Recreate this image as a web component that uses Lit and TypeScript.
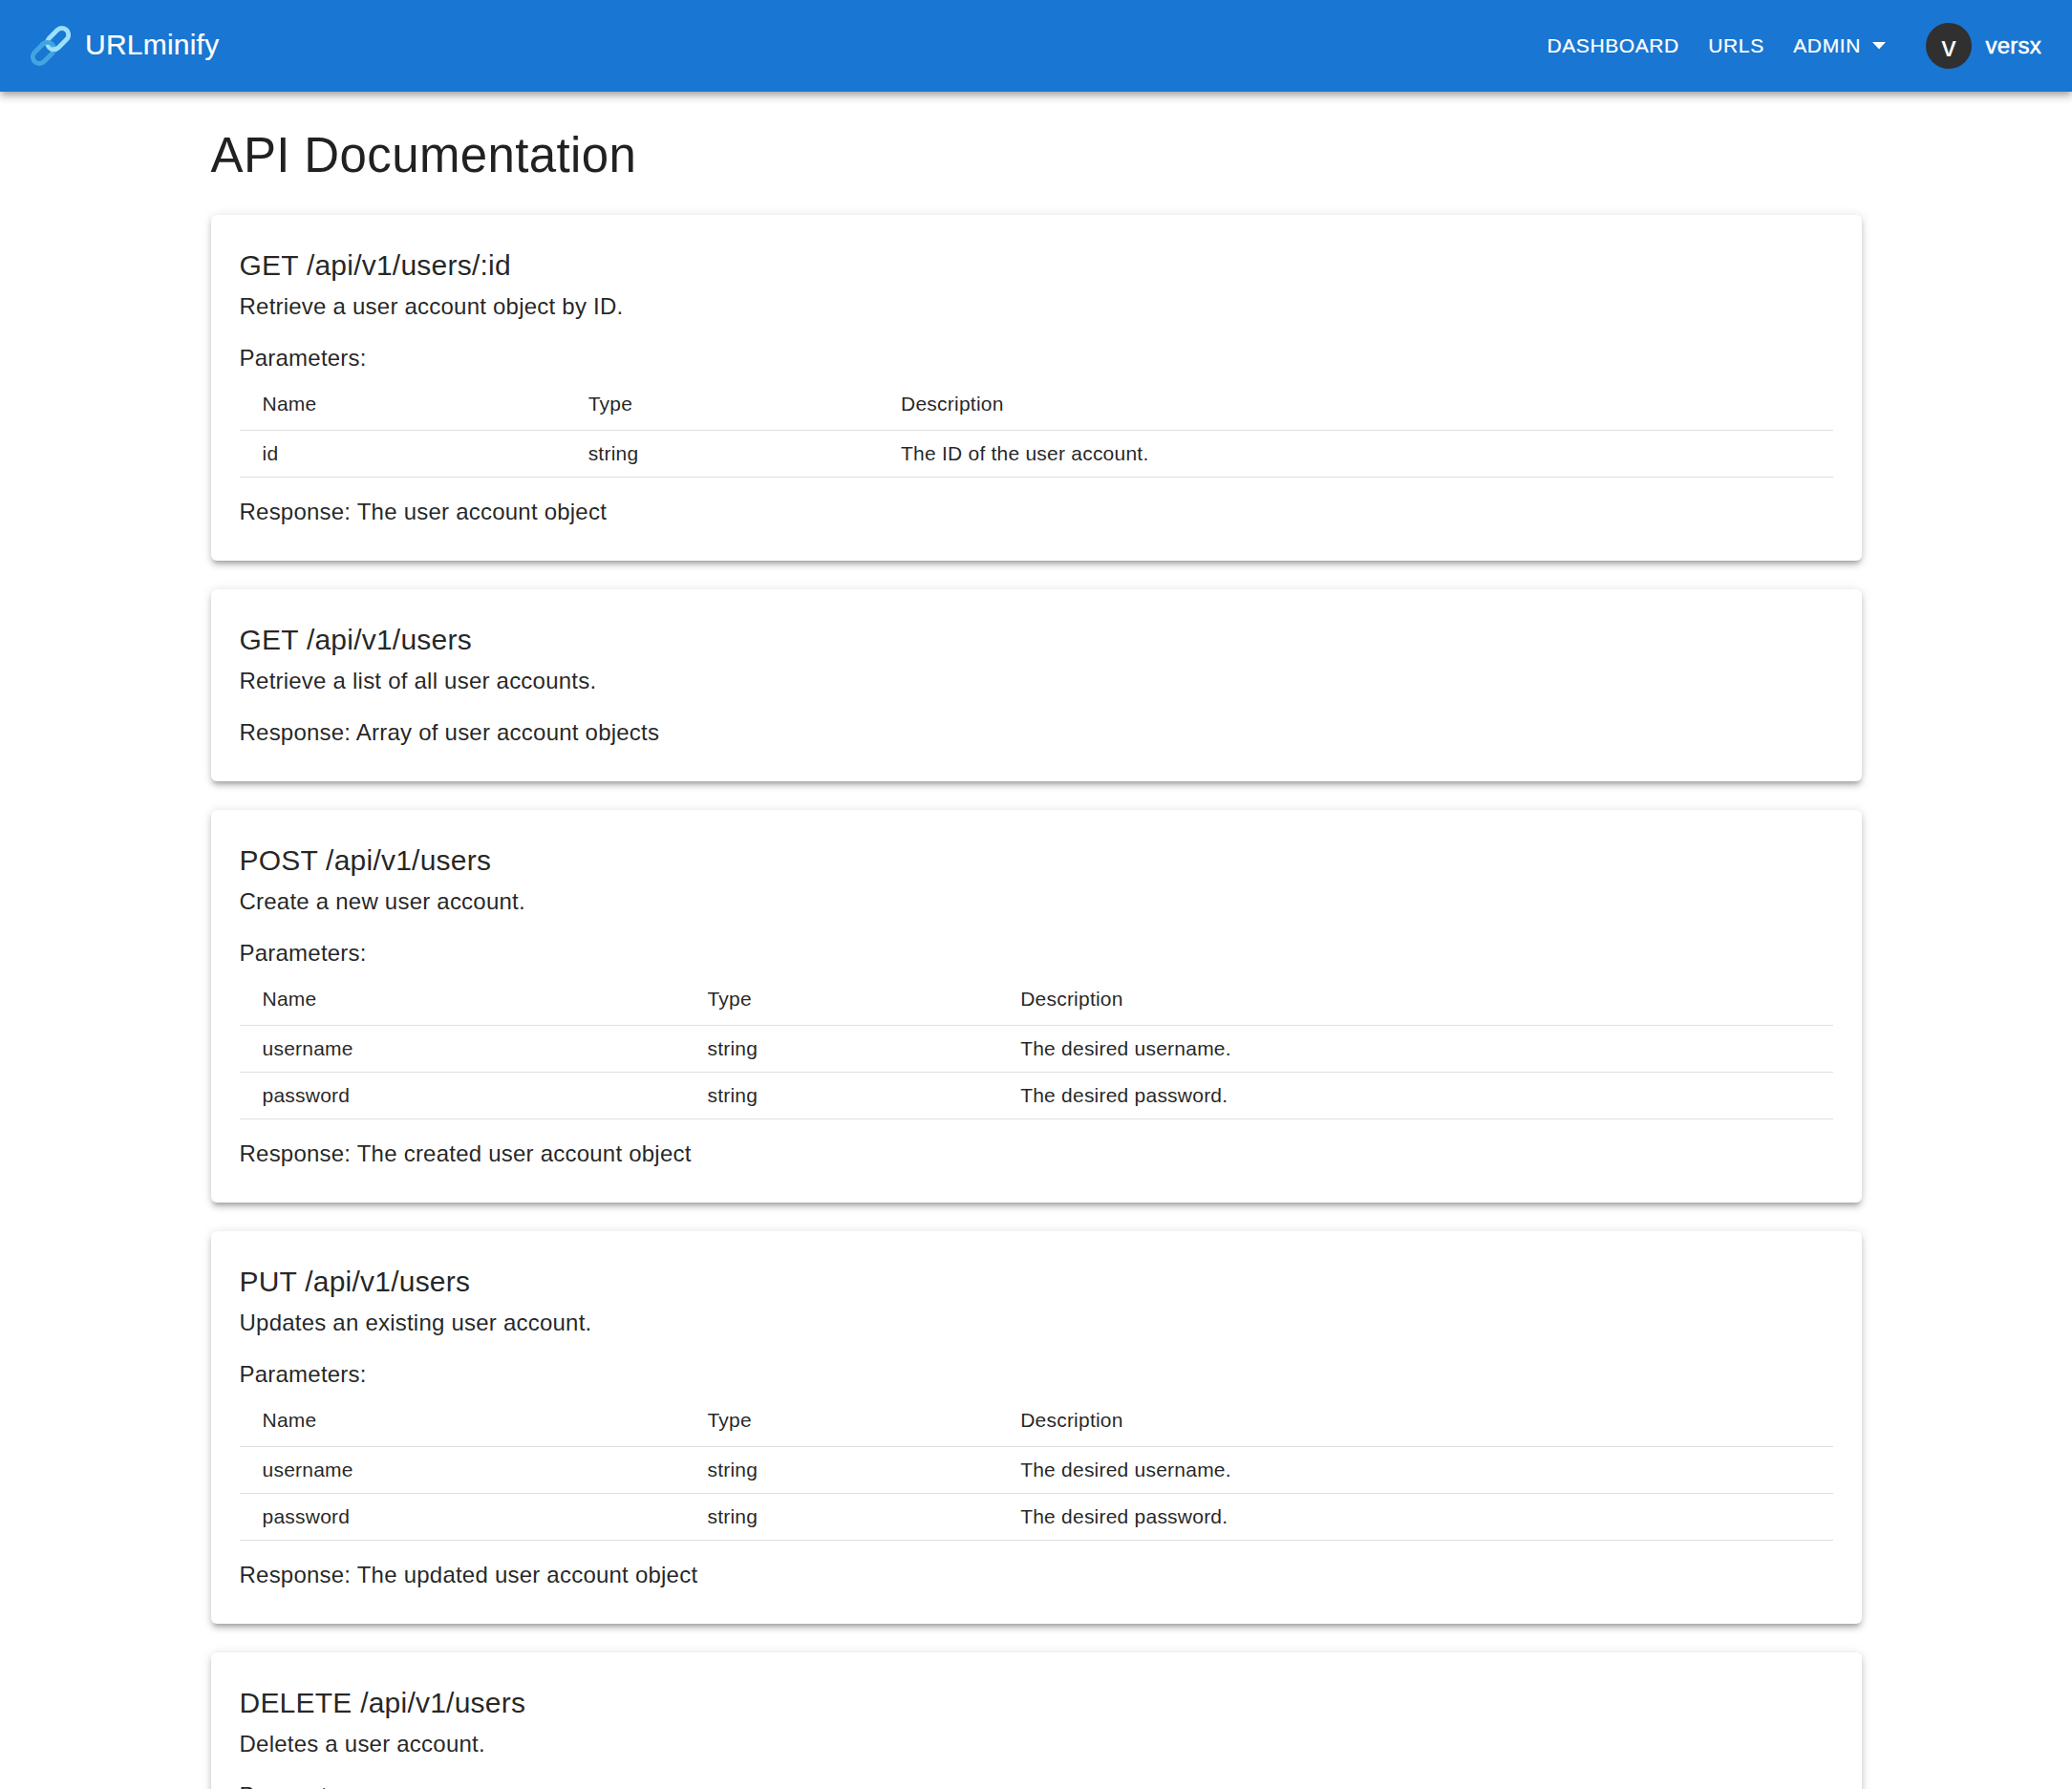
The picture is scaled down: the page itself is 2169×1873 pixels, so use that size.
import { LitElement, html, css, svg, nothing } from "lit";
import { customElement, property } from "lit/decorators.js";

interface Param {
  name: string;
  type: string;
  description: string;
}

interface Endpoint {
  method: string;
  path: string;
  summary: string;
  params?: Param[];
  response?: string;
}

const credentials: Param[] = [
  { name: "username", type: "string", description: "The desired username." },
  { name: "password", type: "string", description: "The desired password." },
];

const endpoints: Endpoint[] = [
  {
    method: "GET",
    path: "/api/v1/users/:id",
    summary: "Retrieve a user account object by ID.",
    params: [{ name: "id", type: "string", description: "The ID of the user account." }],
    response: "The user account object",
  },
  {
    method: "GET",
    path: "/api/v1/users",
    summary: "Retrieve a list of all user accounts.",
    response: "Array of user account objects",
  },
  {
    method: "POST",
    path: "/api/v1/users",
    summary: "Create a new user account.",
    params: credentials,
    response: "The created user account object",
  },
  {
    method: "PUT",
    path: "/api/v1/users",
    summary: "Updates an existing user account.",
    params: credentials,
    response: "The updated user account object",
  },
  {
    method: "DELETE",
    path: "/api/v1/users",
    summary: "Deletes a user account.",
    params: [],
  },
];

const linkIcon = svg`
  <g fill="none" stroke-width="4.8">
    <rect x="-12.85" y="-6.9" width="25.7" height="13.8" rx="6.9" transform="translate(13.4 28.4) rotate(-45)" stroke="#42a5e0"/>
    <rect x="-12.85" y="-6.9" width="25.7" height="13.8" rx="6.9" transform="translate(28.6 13.6) rotate(-45)" stroke="#9be1fb"/>
    <path d="M11.3 20.7 L12.7 19.3 A6.9 6.9 0 0 1 24 21.8" stroke="#42a5e0"/>
  </g>`;

@customElement("top-bar")
class TopBar extends LitElement {
  static styles = css`
    :host {
      display: flex;
      align-items: center;
      box-sizing: border-box;
      height: 96px;
      padding: 0 32px;
      background: #1976d2;
      color: #fff;
      box-shadow: 0 3px 6px -1.5px rgba(0, 0, 0, 0.2), 0 6px 7.5px 0 rgba(0, 0, 0, 0.14),
        0 1.5px 15px 0 rgba(0, 0, 0, 0.12);
    }
    .logo {
      width: 42px;
      height: 42px;
    }
    .brand {
      margin-left: 15px;
      padding-bottom: 2px;
      font-size: 30px;
      line-height: 48px;
      letter-spacing: 0.0075em;
      -webkit-text-stroke: 0.2px #fff;
    }
    .nav {
      margin-left: auto;
      display: flex;
      align-items: center;
      font-size: 21px;
      line-height: 36px;
      letter-spacing: 0.02857em;
      -webkit-text-stroke: 0.2px #fff;
    }
    .item {
      margin-right: 30.5px;
    }
    .admin {
      display: flex;
      align-items: center;
      margin-right: 41.5px;
    }
    .caret {
      width: 14px;
      height: 8px;
      margin-left: 12.5px;
    }
    .avatar {
      display: flex;
      align-items: center;
      justify-content: center;
      box-sizing: border-box;
      width: 48px;
      height: 48px;
      padding-top: 1px;
      border-radius: 50%;
      background: #303030;
      font-size: 30px;
      line-height: 30px;
      letter-spacing: 0;
    }
    .user {
      margin-left: 14.6px;
      font-size: 24px;
      letter-spacing: 0.00938em;
      -webkit-text-stroke: 0.5px #fff;
    }
  `;
  render() {
    return html`
      <svg class="logo" viewBox="0 0 42 42">${linkIcon}</svg>
      <div class="brand">URLminify</div>
      <div class="nav">
        <span class="item">DASHBOARD</span>
        <span class="item">URLS</span>
        <span class="admin">ADMIN<svg class="caret" viewBox="0 0 14 8"><path d="M0 0h14L7 7.5z" fill="#fff" /></svg></span>
        <span class="avatar">v</span>
        <span class="user">versx</span>
      </div>
    `;
  }
}

@customElement("endpoint-card")
class EndpointCard extends LitElement {
  @property({ attribute: false }) endpoint!: Endpoint;
  static styles = css`
    :host {
      display: block;
      padding: 29px 30px 33px;
      border-radius: 6px;
      background: #fff;
      box-shadow: 0 4.5px 4.5px -3px rgba(0, 0, 0, 0.2), 0 4.5px 6px 0 rgba(0, 0, 0, 0.14),
        0 1.5px 12px 0 rgba(0, 0, 0, 0.12);
    }
    .heading {
      margin-bottom: 1px;
      font-size: 30px;
      line-height: 48px;
      letter-spacing: 0.0075em;
    }
    .text {
      font-size: 24px;
      line-height: 36px;
      letter-spacing: 0.00938em;
    }
    .spaced {
      margin-top: 18px;
    }
    .params {
      width: 100%;
      margin-top: 3px;
      border-collapse: separate;
      border-spacing: 0;
      font-size: 21px;
      letter-spacing: 0.01071em;
    }
    .head,
    .cell {
      padding: 9px 24px;
      text-align: left;
      font-weight: 400;
      border-bottom: 1px solid #e0e0e0;
    }
    .head {
      line-height: 36px;
    }
    .cell {
      line-height: 30px;
    }
  `;

  private table(params: Param[]) {
    return html`
      <table class="params">
        <thead>
          <tr>
            <th class="head">Name</th>
            <th class="head">Type</th>
            <th class="head">Description</th>
          </tr>
        </thead>
        <tbody>
          ${params.map(
            (p) => html`<tr>
              <td class="cell">${p.name}</td>
              <td class="cell">${p.type}</td>
              <td class="cell">${p.description}</td>
            </tr>`,
          )}
        </tbody>
      </table>
    `;
  }

  render() {
    const e = this.endpoint;
    return html`
      <div class="heading">${e.method} ${e.path}</div>
      <div class="text">${e.summary}</div>
      ${e.params ? html`<div class="text spaced">Parameters:</div>` : nothing}
      ${e.params?.length ? this.table(e.params) : nothing}
      ${e.response ? html`<div class="text spaced">Response: ${e.response}</div>` : nothing}
    `;
  }
}

@customElement("app-root")
class AppRoot extends LitElement {
  static styles = css`
    :host {
      display: block;
      height: 1873px;
      overflow: hidden;
      background: #fff;
      color: rgba(0, 0, 0, 0.87);
      font-family: "Liberation Sans", Arial, sans-serif;
    }
    .content {
      display: flex;
      flex-direction: column;
      gap: 30px;
      width: 1728px;
      margin: 0 auto;
      padding-top: 35px;
    }
    .title {
      margin: 0 0 1px;
      font-size: 51px;
      line-height: 63px;
      font-weight: 400;
      letter-spacing: 0.00735em;
    }
  `;
  render() {
    return html`
      <top-bar></top-bar>
      <main class="content">
        <h1 class="title">API Documentation</h1>
        ${endpoints.map((e) => html`<endpoint-card .endpoint=${e}></endpoint-card>`)}
      </main>
    `;
  }
}
